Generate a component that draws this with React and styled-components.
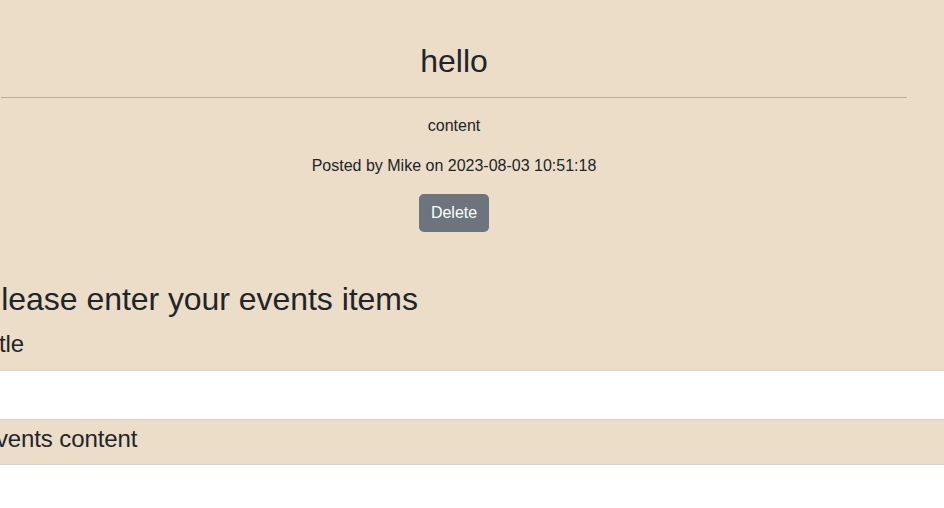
import React from 'react'
import styled, { createGlobalStyle } from 'styled-components'

const GlobalStyle = createGlobalStyle`
  html, body {
    margin: 0;
    padding: 0;
    background-color: #ecddc8;
    overflow: hidden;
  }
  body {
    font-family: "Liberation Sans", Arial, sans-serif;
    color: #212529;
  }
`

const Page = styled.div`
  width: 944px;
  height: 508px;
  overflow: hidden;
`

const Post = styled.section`
  width: 906px;
  padding-top: 42px;
  text-align: center;
  margin-left: 1px;
`

const PostTitle = styled.h2`
  margin: 0;
  font-size: 32px;
  font-weight: 400;
  line-height: 38px;
`

const Rule = styled.hr`
  margin: 17px 0 16px;
  border: 0;
  border-top: 1px solid #bcae9c;
`

const Text = styled.p`
  margin: 0 0 16px;
  font-size: 16px;
  line-height: 24px;
`

const Button = styled.button`
  margin: 0;
  padding: 0 12px;
  height: 38px;
  border: 0;
  border-radius: 5px;
  background-color: #6c757d;
  color: #fff;
  font-family: inherit;
  font-size: 16px;
`

const Form = styled.form`
  margin: 48px 0 0 -20px;
  width: 1000px;
`

const Heading = styled.h3`
  margin: 0;
  font-size: 32px;
  font-weight: 400;
  line-height: 38px;
  letter-spacing: -0.05px;
`

const Label = styled.label`
  display: block;
  font-size: 24px;
  line-height: 34px;
  padding: ${p => p.$top}px 0 ${p => p.$bottom}px;
  letter-spacing: -0.1px;
`

const Input = styled.input`
  display: block;
  box-sizing: border-box;
  width: 100%;
  height: 50px;
  margin: 0;
  border: 0;
  border-top: 1px solid #ced4da;
  border-bottom: 1px solid #ced4da;
  background: #fff;
`

const TextArea = styled.textarea`
  display: block;
  box-sizing: border-box;
  width: 100%;
  height: 80px;
  margin: 0;
  border: 0;
  border-top: 1px solid #ced4da;
  background: #fff;
  resize: none;
`

export default function App() {
  return (
    <Page>
      <GlobalStyle />
      <Post>
        <PostTitle>hello</PostTitle>
        <Rule />
        <Text>content</Text>
        <Text>Posted by Mike on 2023-08-03 10:51:18</Text>
        <Button type="button">Delete</Button>
      </Post>
      <Form>
        <Heading>Please enter your events items</Heading>
        <Label $top={9} $bottom={9} htmlFor="title">Title</Label>
        <Input id="title" type="text" />
        <Label $top={2} $bottom={8} htmlFor="content">Events content</Label>
        <TextArea id="content" />
      </Form>
    </Page>
  )
}
